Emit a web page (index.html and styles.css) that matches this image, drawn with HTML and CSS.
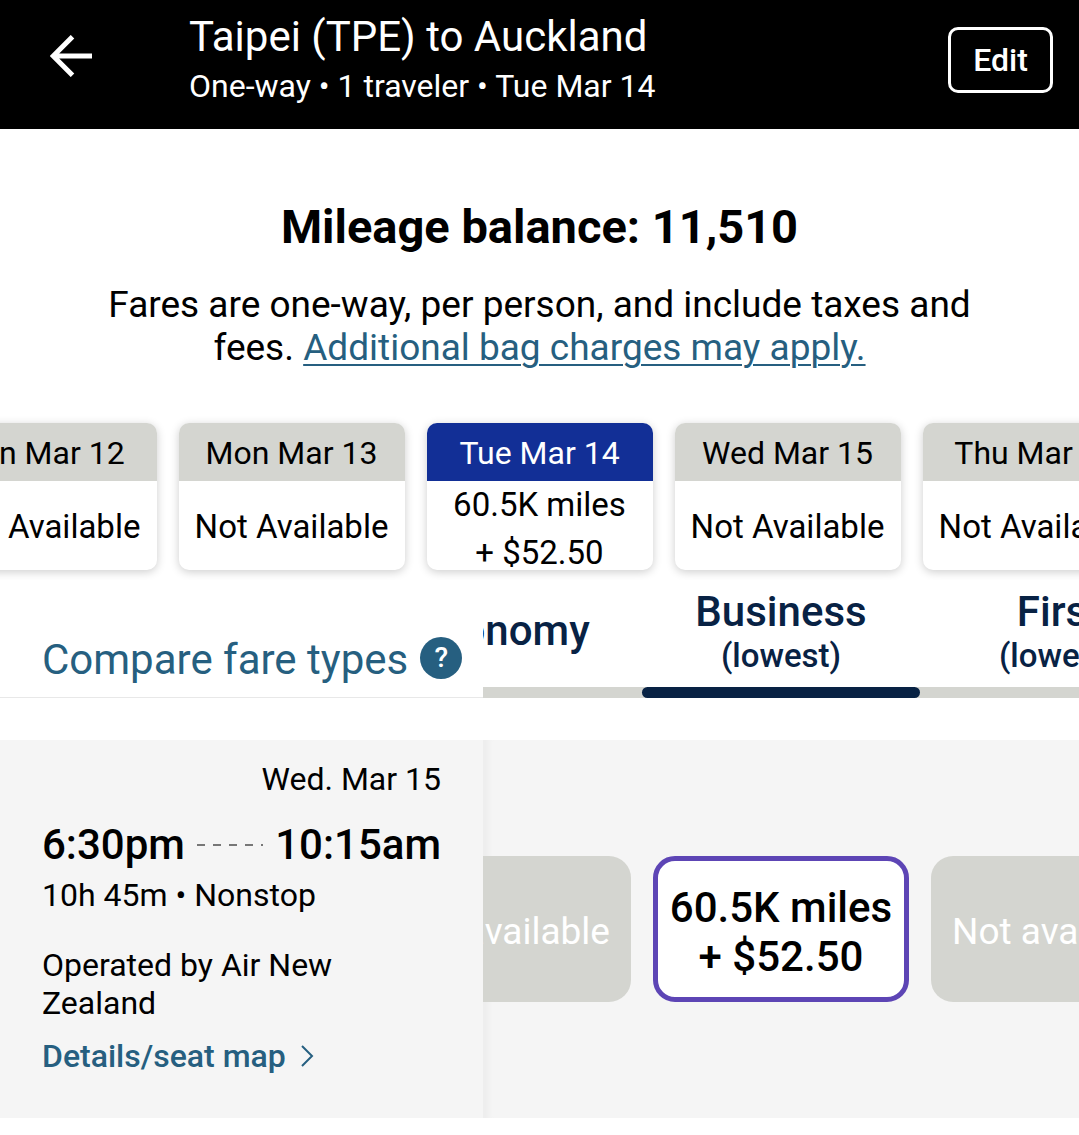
FILE: index.html
```html
<!DOCTYPE html>
<html lang="en">

<head>
	<meta charset="utf-8">
	<meta name="viewport" content="width=device-width, initial-scale=1">
	<title>Taipei (TPE) to Auckland</title>
	<link rel="stylesheet" href="styles.css">
</head>

<body>
	<header class="topbar">
		<button class="back" aria-label="Back">
			<svg width="42" height="42" viewBox="0 0 42 42">
				<path d="M22.5 1.7L3.2 21l19.3 19.3M3 21h39" fill="none" stroke="#fff" stroke-width="5" />
			</svg>
		</button>
		<div class="trip">
			<h1>Taipei (TPE) to Auckland</h1>
			<p>One-way • 1 traveler • Tue Mar 14</p>
		</div>
		<button class="edit">Edit</button>
	</header>

	<main>
		<section class="intro">
			<h2>Mileage balance: 11,510</h2>
			<p>Fares are one-way, per person, and include taxes and fees. <a href="#">Additional bag charges may apply.</a></p>
		</section>

		<nav class="dates">
			<button class="date">
				<span class="day">Sun Mar 12</span>
				<span class="fare">Not Available</span>
			</button>
			<button class="date">
				<span class="day">Mon Mar 13</span>
				<span class="fare">Not Available</span>
			</button>
			<button class="date selected">
				<span class="day">Tue Mar 14</span>
				<span class="fare">60.5K miles<br>+ $52.50</span>
			</button>
			<button class="date">
				<span class="day">Wed Mar 15</span>
				<span class="fare">Not Available</span>
			</button>
			<button class="date">
				<span class="day">Thu Mar 16</span>
				<span class="fare">Not Available</span>
			</button>
		</nav>

		<section class="row types">
			<div class="compare">
				<a href="#">Compare fare types</a>
				<button class="help" aria-label="Help">?</button>
			</div>
			<div class="scroller cabins">
				<button class="cabin">Economy</button>
				<button class="cabin active">Business<small>(lowest)</small></button>
				<button class="cabin">First<small>(lowest)</small></button>
			</div>
		</section>

		<section class="row flight">
			<div class="info">
				<p class="arrives">Wed. Mar 15</p>
				<div class="times">
					<span>6:30pm</span>
					<i class="dashes"></i>
					<span>10:15am</span>
				</div>
				<p>10h 45m • Nonstop</p>
				<p class="operator">Operated by Air New Zealand</p>
				<a class="details" href="#">Details/seat map
					<svg width="14" height="22" viewBox="0 0 14 22">
						<path d="M2 1l10 10L2 21" fill="none" stroke="#265f80" stroke-width="2" />
					</svg>
				</a>
			</div>
			<div class="scroller prices">
				<button class="price" disabled>Not available</button>
				<button class="price best">60.5K miles<br>+ $52.50</button>
				<button class="price" disabled>Not available</button>
			</div>
		</section>
	</main>
</body>

</html>
```

FILE: styles.css
```css
* {
	box-sizing: border-box;
}

body {
	margin: 0;
	background-color: #fff;
	color: #000;
	font-family: Roboto, sans-serif;
	font-size: 32px;
	line-height: 38px;
	overflow-x: hidden;
}

h1,
h2,
p {
	margin: 0;
}

button {
	padding: 0;
	border: none;
	background: none;
	color: inherit;
	font: inherit;
	cursor: pointer;
}

a {
	color: #265f80;
}

svg {
	display: block;
}

/* header */
.topbar {
	display: flex;
	align-items: center;
	height: 129px;
	padding: 0 26px 10px 50px;
	background-color: #000;
	color: #fff;
}

.back {
	width: 139px;
	padding-bottom: 8px;
}

.trip {
	flex: 1;
	padding-bottom: 2px;
}

.trip h1 {
	font-size: 42px;
	font-weight: 400;
	line-height: 54px;
}

.trip p {
	line-height: 44px;
}

.edit {
	width: 105px;
	height: 66px;
	border: solid 3px #fff;
	border-radius: 10px;
	font-weight: 500;
}

/* balance */
.intro {
	padding: 68px 100px 44px;
	text-align: center;
}

.intro h2 {
	font-size: 47px;
	font-weight: 700;
	line-height: 60px;
}

.intro p {
	margin-top: 26px;
	font-size: 37px;
	line-height: 43px;
}

.intro a {
	text-decoration-thickness: 2px;
	text-underline-offset: 4px;
}

/* date strip */
.dates {
	display: flex;
	justify-content: center;
	gap: 22px;
	padding: 10px 0;
	overflow: hidden;
}

.date {
	display: flex;
	flex: 0 0 226px;
	flex-direction: column;
	height: 147px;
	border-radius: 10px;
	background-color: #fff;
	box-shadow: 0 2px 10px rgba(0, 0, 0, 0.2);
	overflow: hidden;
}

.day {
	width: 100%;
	padding-top: 2px;
	background-color: #d4d5d0;
	line-height: 56px;
}

.selected .day {
	background-color: #122f96;
	color: #fff;
}

.fare {
	display: flex;
	flex: 1;
	align-items: center;
	align-self: center;
	padding-top: 2px;
	font-size: 33px;
	line-height: 48px;
	white-space: nowrap;
}

.selected .fare {
	display: block;
	padding: 0;
}

/* fixed left column, fares on the right */
.row {
	display: grid;
	grid-template-columns: 483px minmax(0, 1fr);
}

.scroller {
	display: flex;
	justify-content: center;
	overflow: hidden;
}

.types {
	height: 118px;
}

.compare {
	display: flex;
	align-items: center;
	gap: 12px;
	padding: 38px 0 0 42px;
	border-bottom: solid 1px #e8e8e8;
	font-size: 42px;
}

.compare a {
	padding-top: 4px;
	text-decoration: none;
	white-space: nowrap;
}

.help {
	width: 42px;
	height: 42px;
	border-radius: 50%;
	background-color: #265f80;
	color: #fff;
	font-size: 28px;
	font-weight: 500;
	line-height: 42px;
}

.cabin {
	position: relative;
	display: flex;
	flex: 0 0 278px;
	flex-direction: column;
	align-items: center;
	justify-content: center;
	padding-bottom: 16px;
	color: #082244;
	font-size: 42px;
	font-weight: 500;
	line-height: 50px;
}

.cabins {
	background: linear-gradient(#d4d5d0, #d4d5d0) bottom / 100% 11px no-repeat;
}

.cabin.active::after {
	content: "";
	position: absolute;
	left: 0;
	right: 0;
	bottom: 0;
	height: 11px;
	border-radius: 6px;
	background-color: #082244;
}

.cabin small {
	font-size: 33px;
	line-height: 38px;
}

.flight {
	margin-top: 42px;
	background-color: #f5f5f5;
}

.info {
	padding: 20px 42px 43px;
}

.arrives {
	text-align: right;
}

.times {
	display: flex;
	align-items: center;
	justify-content: space-between;
	margin: 20px 0 4px;
	font-size: 42px;
	font-weight: 500;
	line-height: 54px;
}

.dashes {
	flex: 1;
	height: 2px;
	margin: 0 12px;
	background: repeating-linear-gradient(to right, #777 0 8px, transparent 8px 16px);
}

.operator {
	margin: 32px 0 15px;
}

.details {
	display: flex;
	align-items: center;
	gap: 14px;
	font-weight: 500;
	text-decoration: none;
}

.prices {
	align-items: center;
	gap: 22px;
	box-shadow: inset 9px 0 4px -3px #eee;
}

.price {
	flex: 0 0 256px;
	height: 146px;
	padding-top: 5px;
	border-radius: 22px;
	background-color: #d4d5d0;
	color: #fff;
	font-size: 37px;
	white-space: nowrap;
}

.price.best {
	border: solid 5px #5d45b5;
	background-color: #fff;
	color: #000;
	font-size: 42px;
	font-weight: 500;
	line-height: 49px;
}
```
